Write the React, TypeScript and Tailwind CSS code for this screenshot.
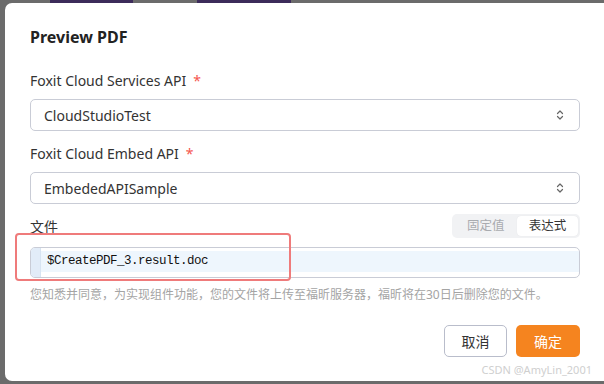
import React from "react";

function Chevrons() {
  return (
    <svg width="10" height="12" viewBox="0 0 10 12" fill="none" stroke="#666" strokeWidth="1.2" strokeLinecap="round" strokeLinejoin="round">
      <path d="M2.5 4.5 L5 2 L7.5 4.5" />
      <path d="M2.5 7.5 L5 10 L7.5 7.5" />
    </svg>
  );
}

function Field({ label, value }: { label: string; value: string }) {
  return (
    <div className="flex flex-col">
      <div className="flex h-[20px] items-center text-[14px] text-[#333]">
        {label}
        <span className="ml-[7px] text-[#f5564e]">*</span>
      </div>
      <div className="mt-[9px] flex h-[32px] items-center justify-between rounded-[5px] border border-[#c9ccd6] pl-[13px] pr-[14px] text-[14px] text-[#333]">
        <span>{value}</span>
        <Chevrons />
      </div>
    </div>
  );
}

export default function App() {
  return (
    <div
      className="relative h-[384px] w-[604px] overflow-hidden bg-[#6b6b6b]"
      style={{ fontFamily: '"Noto Sans", "Noto Sans CJK SC", sans-serif' }}
    >
      {/* purple bits of the page behind the modal */}
      <div className="absolute left-[50px] top-0 h-[4px] w-[83px] bg-[#3c2b5a]" />
      <div className="absolute left-[197px] top-0 h-[4px] w-[94px] bg-[#3c2b5a]" />

      <div className="absolute left-[5px] top-[3px] h-[378px] w-[610px] rounded-[7px] bg-white pl-[25px] pr-[35px] pt-[23px]">
        <h2 className="flex h-[22px] items-center text-[16px] font-bold text-[#222]">Preview PDF</h2>

        <div className="mt-[22px] flex flex-col gap-[12px]">
          <Field label="Foxit Cloud Services API" value="CloudStudioTest" />
          <Field label="Foxit Cloud Embed API" value="EmbededAPISample" />
        </div>

        <div className="mt-[10px] flex items-end justify-between">
          <span className="mb-[1px] text-[14px] text-[#333]">文件</span>
          <div className="flex h-[24px] w-[128px] items-center justify-between rounded-[5px] bg-[#f1f2f4] p-[2px] text-[12.5px]">
            <span className="pl-[13px] text-[#a9abb0]">固定值</span>
            <span className="flex h-[20px] w-[61px] items-center justify-center rounded-[4px] bg-white text-[#333] shadow-[0_0_1px_rgba(0,0,0,0.1)]">
              表达式
            </span>
          </div>
        </div>

        <div className="relative mt-[9px]">
          <div className="flex h-[31px] overflow-hidden rounded-[5px] border border-[#c9ccd6] bg-white">
            <div className="w-[10px] border-r border-[#d7e4f2] bg-[#e2ecf8]" />
            <div className="flex-1 pt-[3px]">
              <div
                className="flex h-[21px] items-center bg-[#eef6fd] pl-[6px] text-[12.5px] tracking-[-0.5px] text-[#111]"
                style={{ fontFamily: '"Liberation Mono", monospace' }}
              >
                $CreatePDF_3.result.doc
              </div>
            </div>
          </div>
          <div className="pointer-events-none absolute left-[-15px] top-[-14px] h-[48px] w-[276px] rounded-[4px] border-2 border-[#ef7b7b]" />
        </div>

        <p className="mt-[8px] text-[12px] text-[#a4a4a4]">
          您知悉并同意，为实现组件功能，您的文件将上传至福昕服务器，福昕将在30日后删除您的文件。
        </p>

        <div className="mt-[21px] flex justify-end gap-[9px]">
          <button className="h-[32px] w-[63px] rounded-[5px] border border-[#b9bdcb] bg-white text-[14px] text-[#333]">
            取消
          </button>
          <button className="h-[32px] w-[64px] rounded-[5px] bg-[#f5841f] text-[14px] text-white">
            确定
          </button>
        </div>
      </div>

      <div className="absolute bottom-[6px] right-[12px] text-[11px] text-[#cfcfcf]">CSDN @AmyLin_2001</div>
    </div>
  );
}
